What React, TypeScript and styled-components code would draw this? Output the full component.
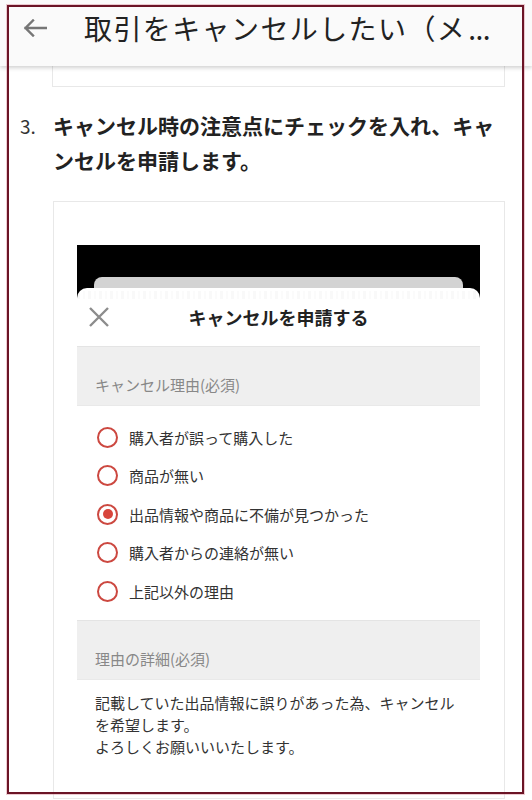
import React from "react";
import styled, { createGlobalStyle } from "styled-components";

const GlobalStyle = createGlobalStyle`
  html, body { margin: 0; padding: 0; background: #ffffff; }
  body {
    font-family: "Noto Sans CJK JP", "Noto Sans", sans-serif;
    color: #222;
    overflow: hidden;
  }
  * { box-sizing: border-box; }
`;

const Page = styled.div`
  width: 532px;
  min-height: 800px;
  background: #fff;
`;

const Header = styled.header`
  position: relative;
  z-index: 2;
  height: 66px;
  background: #fafafa;
  box-shadow: 0 2px 4px rgba(0, 0, 0, 0.18);
  display: flex;
  align-items: flex-start;
  padding-top: 8px;
`;

const BackButton = styled.div`
  width: 24px;
  height: 40px;
  margin-left: 23px;
  display: flex;
  align-items: center;
`;

const HeaderTitle = styled.h1`
  margin: 0 0 0 37px;
  font-size: 28px;
  line-height: 40px;
  font-weight: 400;
  letter-spacing: 1.4px;
  color: #222;
  white-space: nowrap;
`;

const Ellipsis = styled.span`
  letter-spacing: -0.5px;
  margin-left: 2px;
`;

const PrevCardTail = styled.div`
  margin-left: 52px;
  width: 453px;
  height: 21px;
  border: 1px solid #e8e8e8;
  border-top: none;
`;

const Step = styled.div`
  display: flex;
  margin-top: 21px;
`;

const StepNumber = styled.div`
  width: 53px;
  padding-left: 20px;
  font-size: 19px;
  line-height: 35px;
  color: #333;
`;

const StepText = styled.p`
  margin: 0;
  width: 452px;
  font-size: 21px;
  line-height: 35px;
  font-weight: 700;
  color: #222;
`;

const Card = styled.div`
  margin: 23px 0 0 53px;
  width: 452px;
  border: 1px solid #e8e8e8;
  padding: 43px 24px 0 23px;
`;

const Shot = styled.div`
  width: 403px;
  background: #000;
  padding-top: 32px;
`;

const BackSheet = styled.div`
  margin: 0 17px;
  height: 11px;
  background: #d3d3d3;
  border-radius: 8px 8px 0 0;
`;

const Sheet = styled.div`
  background: #fff;
  border-radius: 10px 10px 0 0;
`;

const SheetHeader = styled.div`
  position: relative;
  height: 58px;
  display: grid;
  grid-template-columns: 60px 1fr 60px;
  align-items: center;
  &::before {
    content: "";
    position: absolute;
    left: 0;
    right: 0;
    top: 3px;
    height: 8px;
    background: repeating-linear-gradient(
      90deg,
      rgba(0, 0, 0, 0.025) 0 3px,
      transparent 3px 6px,
      rgba(0, 0, 0, 0.015) 6px 8px,
      transparent 8px 11px
    );
  }
`;

const CloseIcon = styled.div`
  margin-left: 11px;
  width: 22px;
  height: 20px;
  display: flex;
`;

const SheetTitle = styled.div`
  text-align: center;
  font-size: 18px;
  line-height: 26px;
  font-weight: 700;
  color: #222;
`;

const SectionLabel = styled.div`
  height: 60px;
  background: #efefef;
  border-top: 1px solid #e4e4e4;
  border-bottom: 1px solid #e9e9e9;
  padding: 27px 0 0 18px;
  font-size: 15px;
  line-height: 22px;
  color: #888;
`;

const RadioList = styled.div`
  padding: 12px 0 9.5px 0;
`;

const RadioRow = styled.div`
  height: 38.5px;
  display: flex;
  align-items: center;
  padding-left: 20px;
  gap: 11px;
  font-size: 15px;
  color: #333;
`;

const RadioCircle = styled.span<{ $checked?: boolean }>`
  width: 21px;
  height: 21px;
  border-radius: 50%;
  border: 2px solid #cc4840;
  display: flex;
  align-items: center;
  justify-content: center;
  flex-shrink: 0;
  &::after {
    content: "";
    width: 10px;
    height: 10px;
    border-radius: 50%;
    background: ${(p) => (p.$checked ? "#d8453c" : "transparent")};
  }
`;

const DetailText = styled.p`
  margin: 0;
  padding: 12px 18px 40px 18px;
  font-size: 15px;
  line-height: 22px;
  color: #333;
`;

const Frame = styled.div`
  position: fixed;
  left: 7px;
  top: 5px;
  width: 517px;
  height: 789px;
  border: 2px solid #6b1426;
  box-shadow: 0 0 0 1px rgba(214, 140, 152, 0.45);
  pointer-events: none;
  z-index: 10;
`;

const reasons = [
  { label: "購入者が誤って購入した", checked: false },
  { label: "商品が無い", checked: false },
  { label: "出品情報や商品に不備が見つかった", checked: true },
  { label: "購入者からの連絡が無い", checked: false },
  { label: "上記以外の理由", checked: false },
];

export default function App() {
  return (
    <>
      <GlobalStyle />
      <Page>
        <Header>
          <BackButton>
            <svg width="24" height="18" viewBox="0 0 24 18" fill="none">
              <path
                d="M23 9H2.5M10 1.5L2.5 9L10 16.5"
                stroke="#767676"
                strokeWidth="2.4"
                strokeLinecap="square"
              />
            </svg>
          </BackButton>
          <HeaderTitle>
            取引をキャンセルしたい（メ<Ellipsis>...</Ellipsis>
          </HeaderTitle>
        </Header>
        <PrevCardTail />
        <Step>
          <StepNumber>3.</StepNumber>
          <StepText>キャンセル時の注意点にチェックを入れ、キャンセルを申請します。</StepText>
        </Step>
        <Card>
          <Shot>
            <BackSheet />
            <Sheet>
              <SheetHeader>
                <CloseIcon>
                  <svg width="22" height="20" viewBox="0 0 22 20" fill="none">
                    <path
                      d="M2 1L20 19M20 1L2 19"
                      stroke="#8c8c8c"
                      strokeWidth="2.4"
                    />
                  </svg>
                </CloseIcon>
                <SheetTitle>キャンセルを申請する</SheetTitle>
                <span />
              </SheetHeader>
              <SectionLabel>キャンセル理由(必須)</SectionLabel>
              <RadioList>
                {reasons.map((r) => (
                  <RadioRow key={r.label}>
                    <RadioCircle $checked={r.checked} />
                    {r.label}
                  </RadioRow>
                ))}
              </RadioList>
              <SectionLabel>理由の詳細(必須)</SectionLabel>
              <DetailText>
                記載していた出品情報に誤りがあった為、キャンセルを希望します。
                <br />
                よろしくお願いいいたします。
              </DetailText>
            </Sheet>
          </Shot>
        </Card>
      </Page>
      <Frame />
    </>
  );
}
